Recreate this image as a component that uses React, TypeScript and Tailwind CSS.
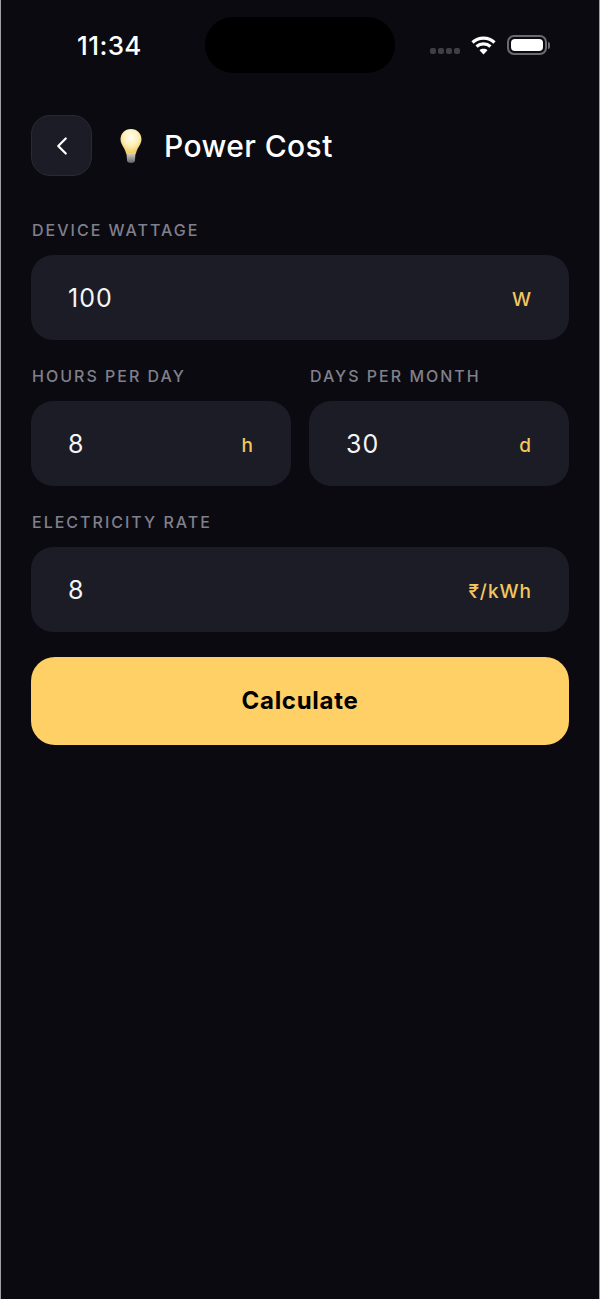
import React from 'react';
import { ChevronLeft } from 'lucide-react';

const Bulb = () => (
  <svg width="30" height="36" viewBox="0 0 30 36">
    <defs>
      <radialGradient id="glass" cx="50%" cy="32%" r="62%">
        <stop offset="0%" stopColor="#fffdf0" />
        <stop offset="55%" stopColor="#fdf0ba" />
        <stop offset="100%" stopColor="#f2cf63" />
      </radialGradient>
      <linearGradient id="base" x1="0" y1="0" x2="0" y2="1">
        <stop offset="0%" stopColor="#d9d4c0" />
        <stop offset="100%" stopColor="#5f5f63" />
      </linearGradient>
    </defs>
    <path d="M15 1C8.8 1 4.5 5.6 4.5 11.2c0 5 3.6 7.6 5 12.3.3 1 .6 2 .9 2.5h9.2c.3-.5.6-1.5.9-2.5 1.4-4.7 5-7.3 5-12.3C25.500 5.600 21.200 1 15 1Z" fill="url(#glass)" />
    <path d="M10.500 25.500h9l-.6 7.500c-.2 1.300-1.900 2-3.900 2s-3.700-.7-3.900-2Z" fill="url(#base)" />
  </svg>
);

const Wifi = () => (
  <svg width="25" height="20" viewBox="0 0 25 20" fill="none" stroke="white" strokeWidth="3.200">
    <path d="M1.500 7.500C7.500 1.700 17.500 1.700 23.500 7.500" />
    <path d="M5.500 11.500C9.500 8 15.500 8 19.500 11.500" />
    <path d="M12.500 19.500 8.500 15.200C10.700 13.400 14.300 13.400 16.500 15.200Z" fill="white" stroke="none" />
  </svg>
);

const Field = ({ label, value, unit }: { label: string; value: string; unit: string }) => (
  <div className="flex-1 min-w-0">
    <div className="pl-[1px] text-[16px] leading-[20px] font-medium tracking-[2px] text-[#80808c] mb-[15px]">{label}</div>
    <div className="h-[85px] rounded-[22px] bg-[#1c1c26] pl-[37px] pr-[37px] flex items-center justify-between">
      <span className="text-[25px] text-[#f5f5f7] tracking-[1px] mt-[3px]">{value}</span>
      <span className="text-[19px] font-medium text-[#f3c75f] tracking-[1px] mt-[6px]">{unit}</span>
    </div>
  </div>
);

export default function App() {
  return (
    <div
      className="w-[600px] h-[1299px] bg-[#0a0a10] border-x border-[#a0a0a4] overflow-hidden"
      style={{ fontFamily: 'Inter, "Noto Sans", sans-serif' }}
    >
      {/* Status bar */}
      <div className="h-[73px] pt-[17px] pl-[76px] pr-[49px] flex items-start">
        <div className="w-[128px] h-[56px] flex items-center text-[26px] font-medium text-white tracking-[0.400px]">11:34</div>
        <div className="w-[190px] h-[56px] rounded-[28px] bg-black" />
        <div className="flex-1 h-[56px] flex items-center justify-end">
          <div className="flex gap-[2px] mt-[12px] mr-[11px]">
            <span className="w-[6px] h-[6px] rounded-[2px] bg-[#3f3f45]" />
            <span className="w-[6px] h-[6px] rounded-[2px] bg-[#3f3f45]" />
            <span className="w-[6px] h-[6px] rounded-[2px] bg-[#3f3f45]" />
            <span className="w-[6px] h-[6px] rounded-[2px] bg-[#3f3f45]" />
          </div>
          <Wifi />
          <div className="ml-[11px] w-[40px] h-[20px] rounded-[7px] border-2 border-[#6b6b6f] p-[2px]">
            <div className="w-full h-full rounded-[4px] bg-white" />
          </div>
          <div className="ml-[1px] w-[2px] h-[7px] rounded-r-[2px] bg-[#6b6b6f]" />
        </div>
      </div>

      <div className="px-[30px]">
        {/* Header */}
        <div className="mt-[42px] flex items-center">
          <button className="w-[61px] h-[61px] rounded-[19px] bg-[#1c1c26] border border-[#2a2a35] flex items-center justify-center">
            <ChevronLeft size={30} strokeWidth={1.800} className="text-white" />
          </button>
          <div className="ml-[24px]"><Bulb /></div>
          <h1 className="ml-[18px] mt-[1px] text-[30px] font-medium text-white tracking-[0.400px]">Power Cost</h1>
        </div>

        <div className="mt-[44px] flex flex-col gap-[26px]">
          <Field label="DEVICE WATTAGE" value="100" unit="W" />
          <div className="flex gap-[18px]">
            <Field label="HOURS PER DAY" value="8" unit="h" />
            <Field label="DAYS PER MONTH" value="30" unit="d" />
          </div>
          <Field label="ELECTRICITY RATE" value="8" unit="₹/kWh" />
        </div>

        <button className="mt-[25px] w-full h-[88px] rounded-[24px] bg-[#fed066] text-[24px] font-bold text-black tracking-[0.700px]">
          Calculate
        </button>
      </div>
    </div>
  );
}
